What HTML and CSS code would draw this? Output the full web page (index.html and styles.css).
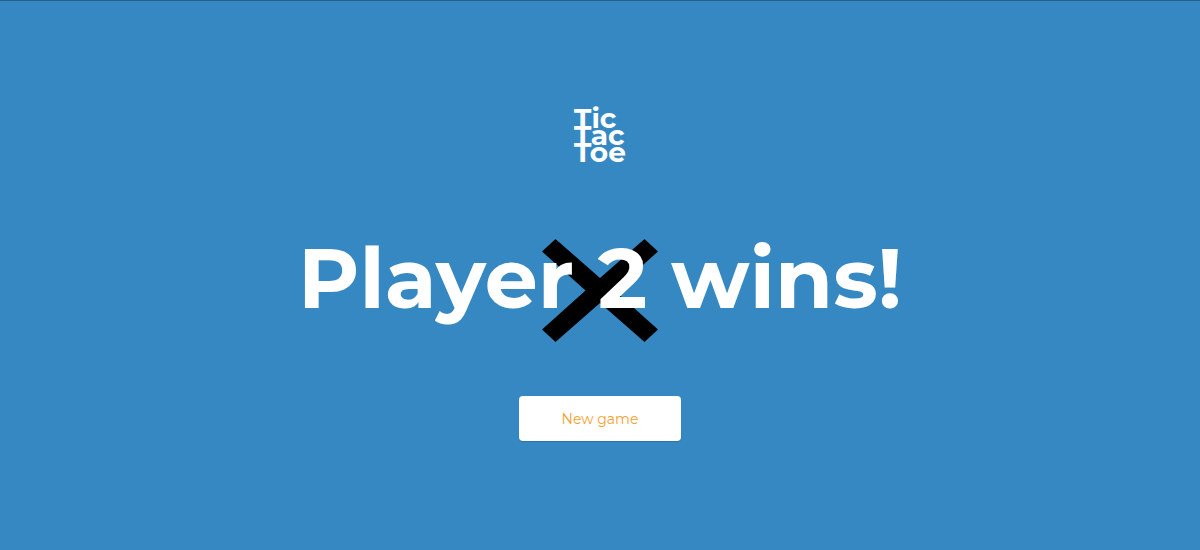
FILE: index.html
```html
<!DOCTYPE html>
<html lang="en">
<head>
<meta charset="utf-8">
<title>Tic Tac Toe</title>
<link rel="stylesheet" href="styles.css">
</head>
<body>
<main class="screen">
  <div class="logo">
    <span>Tic</span>
    <span>Tac</span>
    <span>Toe</span>
  </div>
  <div class="result">
    <svg class="mark" viewBox="0 0 116 103" aria-hidden="true">
      <path d="M13.5 0 58 39 102.500 0 116 12.500 72.500 51.500 116 90.500 102.500 103 58 64 13.500 103 0 90.500 43.500 51.500 0 12.500Z"/>
    </svg>
    <h1 class="message">Player 2 wins!</h1>
  </div>
  <button class="new-game" type="button">New game</button>
</main>
</body>
</html>
```
FILE: styles.css
```css
* {
  box-sizing: border-box;
}

body {
  margin: 0;
  font-family: Montserrat, "Open Sans", sans-serif;
  color: #fff;
  background: #3688c3;
}

.screen {
  display: flex;
  flex-direction: column;
  align-items: center;
  min-height: 100vh;
  padding: 109px 16px 48px;
  border-top: 1px solid #285f88;
}

.logo {
  display: flex;
  flex-direction: column;
  font-size: 28px;
  font-weight: 700;
  line-height: 17px;
}

.result {
  display: grid;
  justify-items: center;
  align-items: start;
  margin-top: 78px;
}

.mark,
.message {
  grid-area: 1 / 1;
}

.mark {
  width: 116px;
  height: 103px;
  fill: #000;
}

.message {
  margin: 0;
  font-size: 84px;
  font-weight: 700;
  line-height: 78px;
  text-align: center;
}

.new-game {
  margin-top: 54px;
  padding: 13px 43px 12px;
  border: 0;
  border-radius: 4px;
  font-family: inherit;
  font-size: 14px;
  line-height: 20px;
  color: #f9a02c;
  background: #fff;
  box-shadow: 0 1px 1px rgba(0, 0, 0, 0.15);
}
```
